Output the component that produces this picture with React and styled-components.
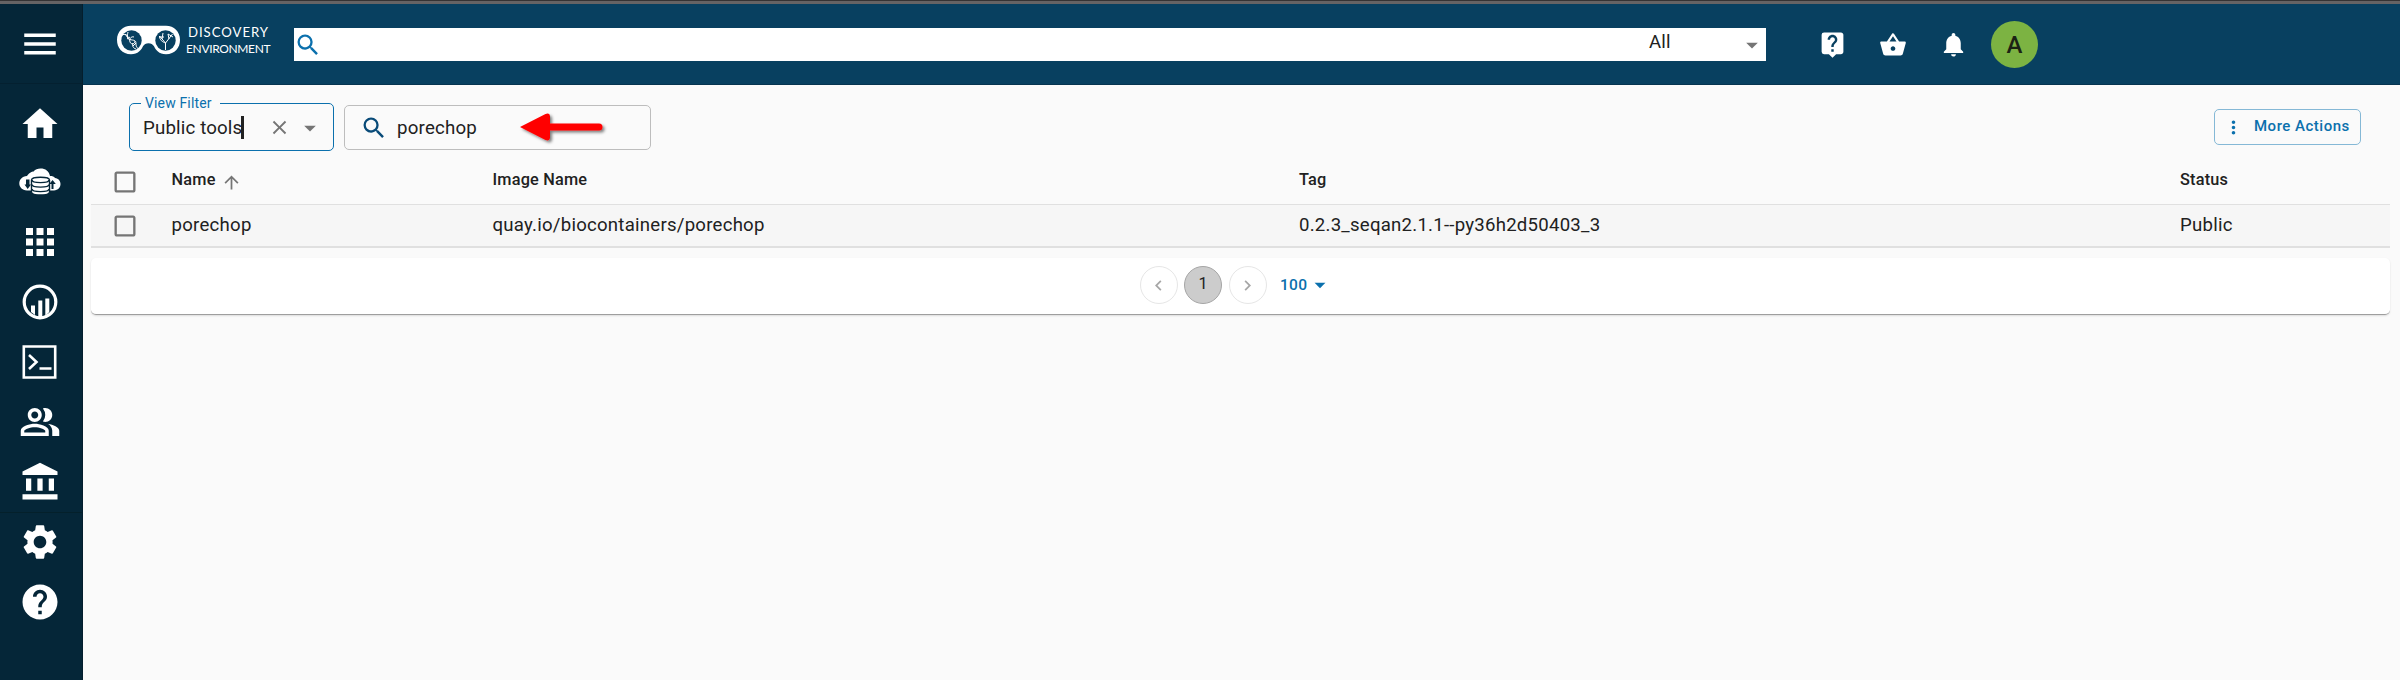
import React from "react";
import styled, { createGlobalStyle } from "styled-components";
import {
  MdMenu, MdHome, MdApps, MdOutlinePeopleAlt, MdAccountBalance, MdSettings, MdHelp,
  MdLiveHelp, MdShoppingBasket, MdNotifications, MdSearch, MdClose, MdArrowDropDown,
  MdArrowUpward, MdMoreVert, MdChevronLeft, MdChevronRight, MdCheckBoxOutlineBlank,
} from "react-icons/md";

const Global = createGlobalStyle`
  * { box-sizing: border-box; }
  body { margin: 0; background: #fafafa; font-family: Roboto, "Liberation Sans", sans-serif; color: #212121; }
  svg { display: block; flex: none; }
`;

const Page = styled.div`
  width: 2400px;
  height: 680px;
  display: flex;
  flex-direction: column;
  overflow: hidden;
`;
const WindowEdge = styled.div`
  height: 4px;
  flex: none;
  background: #666364;
  border-top: 1px solid #353334;
`;
const Shell = styled.div`
  flex: 1;
  display: flex;
  min-height: 0;
`;
const Sidebar = styled.nav`
  width: 83px;
  background: #052638;
  border-right: 1px solid #041e2d;
  color: #fff;
`;
const MenuSlot = styled.div`
  height: 80px;
  display: flex;
  align-items: center;
  justify-content: center;
  border-bottom: 1px solid #042030;
  padding-right: 3px;
`;
const NavGroup = styled.div`
  padding-top: ${(p) => p.$top || 0}px;
  padding-right: 3px;
  box-shadow: ${(p) => (p.$divided ? "0 1px 0 #04202b" : "none")};
`;
const NavItem = styled.div`
  height: 60px;
  display: flex;
  align-items: center;
  justify-content: center;
  padding-top: ${(p) => p.$drop || 0}px;
`;
const Main = styled.div`
  flex: 1;
  display: flex;
  flex-direction: column;
`;
const Header = styled.header`
  height: 81px;
  background: #084060;
  border-bottom: 1px solid #063450;
  color: #fff;
  display: flex;
  align-items: flex-start;
  padding-left: 33px;
`;
const Logo = styled.div`
  display: flex;
  width: 178px;
  padding-top: 21px;
`;
const Wordmark = styled.div`
  margin: -1px 0 0 5px;
  font-family: Lato, sans-serif;
  white-space: nowrap;
`;
const WordTop = styled.div`
  font-size: 13.2px;
  line-height: 17px;
  letter-spacing: 0.95px;
  padding-left: 2px;
`;
const WordBottom = styled.div`
  font-size: 12px;
  line-height: 15px;
  letter-spacing: -0.35px;
`;
const SearchBar = styled.div`
  width: 1472px;
  height: 33px;
  margin-top: 24px;
  background: #fff;
  color: #0b70ad;
  display: flex;
  align-items: center;
`;
const Scope = styled.div`
  margin-left: auto;
  width: 117px;
  display: flex;
  justify-content: space-between;
  align-items: center;
  color: #212121;
  font-size: 18.6px;
  letter-spacing: 0.2px;
  height: 33px;
  padding-bottom: 6px;
`;
const Caret = styled(MdArrowDropDown)`
  color: ${(p) => p.$tone || "#757575"};
  margin-top: ${(p) => p.$drop || 0}px;
`;
const HeaderIcons = styled.div`
  display: flex;
  align-items: center;
  height: 47px;
  margin-top: 17px;
  margin-left: 52px;
  gap: 32px;
`;
const Avatar = styled.div`
  width: 47px;
  height: 47px;
  border-radius: 50%;
  background: #7cb342;
  color: #1c2314;
  font-size: 24px;
  display: grid;
  place-items: center;
  margin-left: -9px;
  font-weight: 500;
`;
const Toolbar = styled.div`
  height: 75px;
  padding: 20px 39px 0 46px;
  display: flex;
  align-items: flex-start;
`;
const FilterField = styled.fieldset`
  width: 205px;
  height: 56px;
  margin: -10px 0 0;
  padding: 0 9px 0 13px;
  border: 1px solid #0b70ad;
  border-radius: 5px;
  min-width: 0;
`;
const Legend = styled.legend`
  color: #0b70ad;
  font-size: 14px;
  line-height: 17px;
  height: 17px;
  padding: 0 8px 0 4px;
  margin-left: -2px;
  letter-spacing: 0.15px;
`;
const FieldRow = styled.div`
  display: flex;
  align-items: center;
  height: 31px;
  font-size: 18.7px;
  letter-spacing: 0.15px;
`;
const TextCursor = styled.span`
  width: 3px;
  height: 23px;
  margin-left: -1px;
  background: #212121;
`;
const ClearIcon = styled(MdClose)`
  color: #757575;
  margin-left: auto;
  margin-right: 5px;
`;
const SearchField = styled.div`
  width: 307px;
  height: 45px;
  margin-left: 10px;
  border: 1px solid #bdbdbd;
  border-radius: 5px;
  display: flex;
  align-items: center;
  padding-left: 15px;
  font-size: 18.7px;
  letter-spacing: 0.2px;
  color: #212121;
`;
const SearchValue = styled.span`
  margin-left: 9px;
  width: 121px;
`;
const MoreButton = styled.div`
  margin: 4px 0 0 auto;
  width: 147px;
  height: 36px;
  border: 1px solid #85b8d6;
  border-radius: 5px;
  color: #0b70ad;
  display: flex;
  align-items: center;
  font-size: 15px;
  font-weight: 500;
  letter-spacing: 0.5px;
  padding-left: 8px;
`;
const MoreText = styled.span`
  margin-left: 10px;
  white-space: nowrap;
  padding-bottom: 2px;
`;
const Table = styled.div`
  margin: 0 10px 0 8px;
`;
const Row = styled.div`
  display: grid;
  grid-template-columns: 80.6px 320.9px 806.5px 881px 1fr;
  align-items: center;
  height: ${(p) => (p.$head ? 45 : 43)}px;
  font-size: ${(p) => (p.$head ? 16.3 : 18.6)}px;
  font-weight: ${(p) => (p.$head ? 500 : 400)};
  background: ${(p) => (p.$head ? "#fafafa" : "#f6f6f6")};
  border-bottom: ${(p) => (p.$head ? 1 : 2)}px solid #e0e0e0;
  letter-spacing: ${(p) => (p.$head ? 0.2 : 0.24)}px;
`;
const Cell = styled.div`
  display: flex;
  align-items: center;
  gap: 5px;
  white-space: nowrap;
  height: 24px;
  line-height: 22px;
  margin-top: ${(p) => (p.$raise ? -4 : -1)}px;
`;
const SortIcon = styled(MdArrowUpward)`
  color: #757575;
  margin-top: 4px;
`;
const CheckCell = styled.div`
  padding-left: 20px;
  color: #757575;
  margin-top: ${(p) => (p.$raise ? -1 : 0)}px;
`;
const Pager = styled.div`
  margin: 10px 10px 0 8px;
  height: 57px;
  background: #fff;
  border-radius: 5px;
  border-bottom: 1px solid #9e9e9e;
  box-shadow: 0 1px 2px rgba(0, 0, 0, 0.12);
  display: flex;
  align-items: center;
  justify-content: center;
  gap: 6.4px;
  padding: 0 8px 2px 0;
`;
const PageDot = styled.div`
  width: 38px;
  height: 38px;
  border-radius: 50%;
  border: 1px solid ${(p) => (p.$active ? "#a5a5a5" : "#e6e6e6")};
  background: ${(p) => (p.$active ? "#cccccc" : "#fff")};
  color: ${(p) => (p.$active ? "#212121" : "#a6a6a6")};
  display: grid;
  place-items: center;
  font-size: 16.300px;
  padding-bottom: ${(p) => (p.$active ? 3 : 0)}px;
`;
const PageSize = styled.div`
  display: flex;
  align-items: center;
  margin-left: 7px;
  color: #0b70ad;
  font-size: 15.5px;
  font-weight: 500;
  letter-spacing: 0.3px;
`;

const Goggles = () => (
  <svg width="65" height="30" viewBox="0 0 65 30" fill="none">
    <path fill="#fff" d="M15 .8h35c8 0 14 6 14 14s-5 14.500-14 14.500c-7 0-10.500-4.500-12-8-1.200-2-3-3-5.500-3s-4.300 1-5.500 3c-1.500 3.500-5 8-12 8-9 0-14-6.500-14-14.500s6-14 14-14z" />
    <circle cx="15.500" cy="15.500" r="10.200" fill="#084060" />
    <circle cx="49.500" cy="15.500" r="10.200" fill="#084060" />
    <g stroke="#fff" strokeWidth="1">
      <path d="M7 9.500c6-1 4 4 7 5s6 0 6 4 1 5 4 5M12 7c-1 4-1 7 2 8M18 12c-3-1-5 2-4 5s5 2 5-1M17 18c-1 3 0 5 3 6M14 12l-3 2M20 18l-3 3M9 9l3 4" />
      <path d="M49.500 25v-7l-6-7M49.500 18l7-9M46 14l1-6M53 14l-1-5M43 12h5M52 9l5 3M49.500 18c-3-1-6-3-6-7" />
    </g>
  </svg>
);

const CloudData = () => (
  <svg width="42" height="28" viewBox="0 0 42 28">
    <path fill="#fff" d="M8 22.500C3 22 .3 19 .3 15.500c0-4 2.700-7 7.700-7.500C10.500 4 13 4 14.500 3.500 16.500 1.300 18.500.5 21.500.5c5 0 8.500 2.500 9.500 7.500 2.500 0 4 .5 5 2 3.500.5 5.500 3 5.500 6 0 3.500-2.500 6-6.500 6.500z" />
    <path fill="#052638" d="M7 11.500h3.500v5H12L8.700 21 5.500 16.500H7zM34.500 21h-2v-5h-2.200l3.300-4 3.200 4h-2.300z" />
    <path fill="#fff" stroke="#052638" strokeWidth="1.400" d="M12.500 12c0-3.700 18-3.700 18 0v12c0 4-18 4-18 0z" />
    <path fill="none" stroke="#052638" strokeWidth="1.400" d="M13 12c0 3.500 17 3.500 17 0M13 16.500c0 3.500 17 3.500 17 0M13 21c0 3.500 17 3.500 17 0" />
  </svg>
);

const Analytics = () => (
  <svg width="36" height="36" viewBox="0 0 36 36">
    <circle cx="18" cy="18" r="15.800" fill="none" stroke="#fff" strokeWidth="3.200" />
    <path fill="#fff" d="M9 21.500h4v9.500l-4-3zM16.300 16.500h4v17h-4zM23.300 14.500h4V28l-4 4z" />
  </svg>
);

const Terminal = () => (
  <svg width="35" height="34" viewBox="0 0 35 34" fill="none" stroke="#fff">
    <path strokeWidth="2.600" d="M1.800 1.500h31.400v31H1.800zM7 10l7.500 7L7 24M17.500 23.500h12" />
  </svg>
);

const RedArrow = () => (
  <svg width="90" height="36" viewBox="0 0 90 36">
    <defs>
      <filter id="arrow-shadow" x="-20%" y="-20%" width="140%" height="160%">
        <feDropShadow dx="2" dy="2" stdDeviation="1.500" floodColor="#000" floodOpacity="0.500" />
      </filter>
    </defs>
    <path filter="url(#arrow-shadow)" fill="#f00" d="M2 17 27.500 4q4-1.500 4.500 2v7.500h49q3.500 0 3.500 3.500t-3.500 3.500H32V28q-.5 3.500-4.500 2z" />
  </svg>
);

const Box = () => <MdCheckBoxOutlineBlank size={28} />;

export default function App() {
  return (
    <Page>
      <Global />
      <WindowEdge />
      <Shell>
        <Sidebar>
          <MenuSlot><MdMenu size={42} /></MenuSlot>
          <NavGroup $top={8} $divided>
            <NavItem $drop={3}><MdHome size={42} /></NavItem>
            <NavItem><CloudData /></NavItem>
            <NavItem><MdApps size={42} /></NavItem>
            <NavItem><Analytics /></NavItem>
            <NavItem><Terminal /></NavItem>
            <NavItem><MdOutlinePeopleAlt size={42} /></NavItem>
            <NavItem><MdAccountBalance size={42} /></NavItem>
          </NavGroup>
          <NavGroup>
            <NavItem><MdSettings size={42} /></NavItem>
            <NavItem><MdHelp size={42} /></NavItem>
          </NavGroup>
        </Sidebar>
        <Main>
          <Header>
            <Logo>
              <Goggles />
              <Wordmark>
                <WordTop>DISCOVERY</WordTop>
                <WordBottom>ENVIRONMENT</WordBottom>
              </Wordmark>
            </Logo>
            <SearchBar>
              <MdSearch size={28} />
              <Scope>All<Caret size={28} $drop={6} /></Scope>
            </SearchBar>
            <HeaderIcons>
              <MdLiveHelp size={29} />
              <MdShoppingBasket size={28} />
              <MdNotifications size={29} />
              <Avatar>A</Avatar>
            </HeaderIcons>
          </Header>
          <Toolbar>
            <FilterField>
              <Legend>View Filter</Legend>
              <FieldRow>
                Public tools<TextCursor />
                <ClearIcon size={23} />
                <Caret size={28} />
              </FieldRow>
            </FilterField>
            <SearchField>
              <MdSearch size={28} color="#084a78" />
              <SearchValue>porechop</SearchValue>
              <RedArrow />
            </SearchField>
            <MoreButton>
              <MdMoreVert size={21} />
              <MoreText>More Actions</MoreText>
            </MoreButton>
          </Toolbar>
          <Table>
            <Row $head>
              <CheckCell $raise><Box /></CheckCell>
              <Cell $raise>Name <SortIcon size={21} /></Cell>
              <Cell $raise>Image Name</Cell>
              <Cell $raise>Tag</Cell>
              <Cell $raise>Status</Cell>
            </Row>
            <Row>
              <CheckCell><Box /></CheckCell>
              <Cell>porechop</Cell>
              <Cell>quay.io/biocontainers/porechop</Cell>
              <Cell>0.2.3_seqan2.1.1--py36h2d50403_3</Cell>
              <Cell>Public</Cell>
            </Row>
          </Table>
          <Pager>
            <PageDot><MdChevronLeft size={21} /></PageDot>
            <PageDot $active>1</PageDot>
            <PageDot><MdChevronRight size={21} /></PageDot>
            <PageSize>100<Caret size={26} $tone="#0b70ad" /></PageSize>
          </Pager>
        </Main>
      </Shell>
    </Page>
  );
}
